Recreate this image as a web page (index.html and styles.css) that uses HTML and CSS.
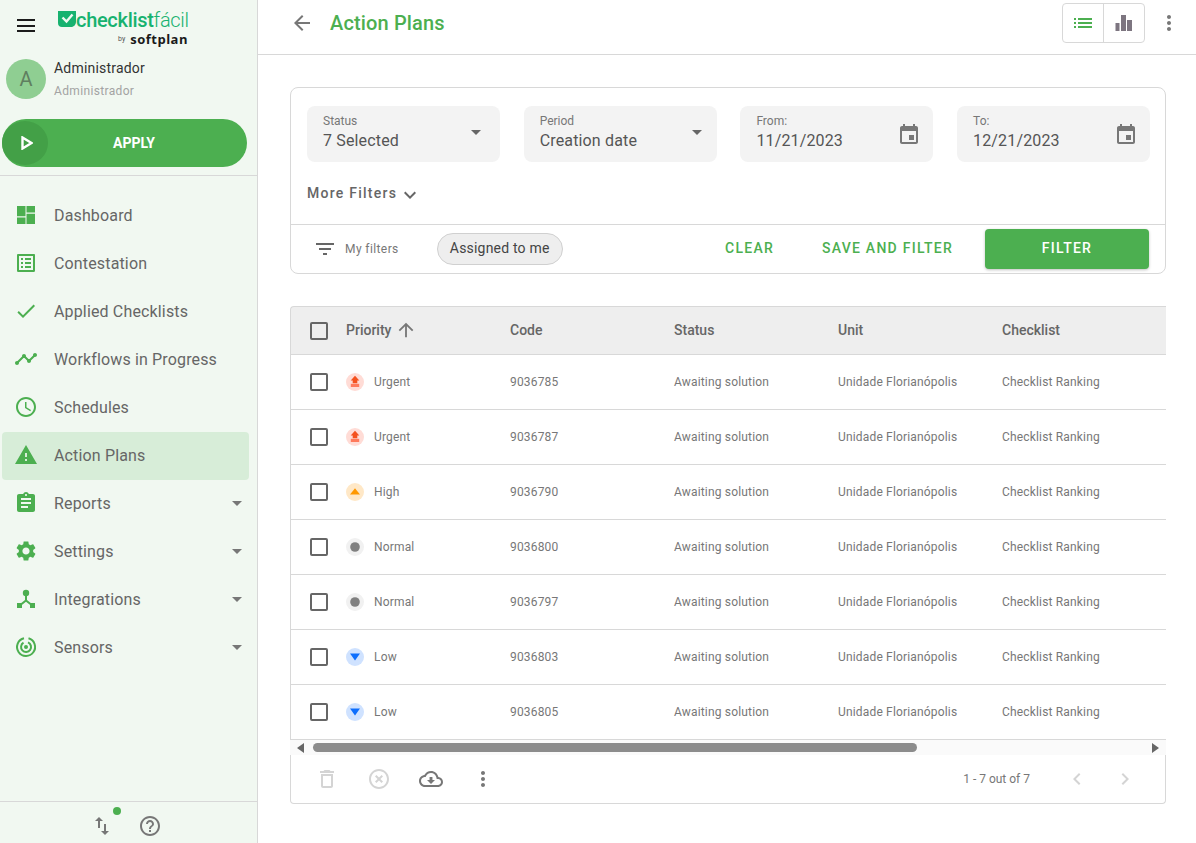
FILE: index.html
```html
<!DOCTYPE html>
<html lang="en">
<head>
<meta charset="utf-8">
<title>Action Plans</title>
<link rel="stylesheet" href="styles.css">
</head>
<body>
<svg class="sprite" width="0" height="0" aria-hidden="true">
  <symbol id="i-dashboard" viewBox="3 3 18 18"><path d="M3 13.300h8.500V3H3zm0 7.700h8.500v-6.600H3zm9.500 0H21V10.700h-8.500zm0-18v6.600H21V3z"/></symbol>
  <symbol id="i-list-alt" viewBox="3 3 18 18"><path d="M19 5v14H5V5h14m1.100-2H3.900c-.5 0-.9.4-.9.9v16.200c0 .4.4.9.9.9h16.200c.4 0 .9-.5.9-.9V3.900c0-.5-.5-.9-.9-.9zM11 7h6v2h-6V7zm0 4h6v2h-6v-2zm0 4h6v2h-6zM7 7h2v2H7zm0 4h2v2H7zm0 4h2v2H7z"/></symbol>
  <symbol id="i-check" viewBox="0 0 24 24"><path d="M9 16.170L4.830 12l-1.420 1.410L9 19 21 7l-1.410-1.410z"/></symbol>
  <symbol id="i-timeline" viewBox="0 0 24 24"><path d="M23 8c0 1.100-.9 2-2 2-.18 0-.35-.02-.51-.07l-3.560 3.550c.05.16.07.34.07.52 0 1.100-.9 2-2 2s-2-.9-2-2c0-.18.02-.36.07-.52l-2.550-2.550c-.16.05-.34.07-.52.07s-.36-.02-.52-.07l-4.550 4.560c.05.16.07.33.07.51 0 1.100-.9 2-2 2s-2-.9-2-2 .9-2 2-2c.18 0 .35.02.51.07l4.560-4.550C8.020 9.360 8 9.180 8 9c0-1.100.9-2 2-2s2 .9 2 2c0 .18-.02.36-.07.52l2.550 2.550c.16-.05.34-.07.52-.07s.36.02.52.07l3.550-3.560C19.020 8.350 19 8.180 19 8c0-1.100.9-2 2-2s2 .9 2 2z"/></symbol>
  <symbol id="i-schedule" viewBox="0 0 24 24"><path d="M11.990 2C6.470 2 2 6.480 2 12s4.470 10 9.990 10C17.520 22 22 17.520 22 12S17.520 2 11.990 2zM12 20c-4.420 0-8-3.580-8-8s3.580-8 8-8 8 3.580 8 8-3.580 8-8 8zm.5-13H11v6l5.250 3.150.75-1.230-4.500-2.670z"/></symbol>
  <symbol id="i-warning" viewBox="0 0 24 24"><path d="M1 21h22L12 2 1 21zm12-3h-2v-2h2v2zm0-4h-2v-4h2v4z"/></symbol>
  <symbol id="i-assignment" viewBox="0 0 24 24"><path d="M19 3h-4.180C14.400 1.840 13.300 1 12 1c-1.300 0-2.400.84-2.820 2H5c-1.100 0-2 .9-2 2v14c0 1.100.9 2 2 2h14c1.100 0 2-.9 2-2V5c0-1.100-.9-2-2-2zm-7 0c.55 0 1 .45 1 1s-.45 1-1 1-1-.45-1-1 .45-1 1-1zm2 14H7v-2h7v2zm3-4H7v-2h10v2zm0-4H7V7h10v2z"/></symbol>
  <symbol id="i-settings" viewBox="0 0 24 24"><path d="M19.140 12.940c.04-.3.06-.61.06-.94 0-.32-.02-.64-.07-.94l2.030-1.580c.18-.14.23-.41.12-.61l-1.920-3.320c-.12-.22-.37-.29-.59-.22l-2.390.96c-.5-.38-1.030-.7-1.620-.94l-.36-2.540c-.04-.24-.24-.41-.48-.41h-3.840c-.24 0-.43.17-.47.41l-.36 2.540c-.59.24-1.130.57-1.620.94l-2.390-.96c-.22-.08-.47 0-.59.22L2.740 8.870c-.12.21-.08.47.12.61l2.030 1.580c-.05.3-.09.63-.09.94s.02.64.07.94l-2.030 1.580c-.18.14-.23.41-.12.61l1.920 3.320c.12.22.37.29.59.22l2.390-.96c.5.38 1.030.7 1.620.94l.36 2.540c.05.24.24.41.48.41h3.840c.24 0 .44-.17.47-.41l.36-2.540c.59-.24 1.130-.56 1.620-.94l2.390.96c.22.08.47 0 .59-.22l1.920-3.320c.12-.22.07-.47-.12-.61l-2.010-1.580zM12 15.600c-1.980 0-3.600-1.620-3.600-3.600s1.620-3.600 3.600-3.600 3.600 1.620 3.600 3.600-1.620 3.600-3.600 3.600z"/></symbol>
  <symbol id="i-integrations" viewBox="0 0 24 24"><circle cx="12" cy="6" r="3.200"/><path d="M11 8h2v5l5 4-1.200 1.600L12 14.800l-4.800 3.800L6 17l5-4z"/><path d="M3 16h5v5H3zM16 16h5v5h-5z"/></symbol>
  <symbol id="i-sensors" viewBox="0 0 24 24"><path d="M14.500 3.300A9 9 0 1 1 10 3.200M14 7.400A5 5 0 1 1 9.500 7.700" fill="none" stroke="currentColor" stroke-width="2"/><circle cx="12" cy="12" r="2"/></symbol>
  <symbol id="i-drop" viewBox="0 0 24 24"><path d="M7 10l5 5 5-5z"/></symbol>
  <symbol id="i-swap" viewBox="0 0 24 24"><path d="M16 17.010V10h-2v7.010h-3L15 21l4-3.990h-3zM9 3L5 6.990h3V14h2V6.990h3L9 3z"/></symbol>
  <symbol id="i-help" viewBox="0 0 24 24"><path d="M11 18h2v-2h-2v2zm1-16C6.480 2 2 6.480 2 12s4.480 10 10 10 10-4.480 10-10S17.520 2 12 2zm0 18c-4.410 0-8-3.590-8-8s3.590-8 8-8 8 3.590 8 8-3.590 8-8 8zm0-14c-2.210 0-4 1.790-4 4h2c0-1.100.9-2 2-2s2 .9 2 2c0 2-3 1.750-3 5h2c0-2.250 3-2.500 3-5 0-2.210-1.790-4-4-4z"/></symbol>
  <symbol id="i-event" viewBox="0 0 24 24"><path d="M17 12h-5v5h5v-5zM16 1v2H8V1H6v2H5c-1.110 0-1.990.9-1.990 2L3 19c0 1.100.89 2 2 2h14c1.100 0 2-.9 2-2V5c0-1.100-.9-2-2-2h-1V1h-2zm3 18H5V8h14v11z"/></symbol>
  <symbol id="i-back" viewBox="0 0 24 24"><path d="M20 11H7.830l5.590-5.590L12 4l-8 8 8 8 1.410-1.410L7.830 13H20v-2z"/></symbol>
  <symbol id="i-list" viewBox="0 0 24 24"><path d="M3 13h2v-2H3v2zm0 4h2v-2H3v2zm0-8h2V7H3v2zm4 4h14v-2H7v2zm0 4h14v-2H7v2zM7 7v2h14V7H7z"/></symbol>
  <symbol id="i-bars" viewBox="0 0 18 18"><path d="M.5 9h4v8h-4zM6 1h5v16H6zM12 6h5v11h-5z"/></symbol>
  <symbol id="i-more" viewBox="0 0 24 24"><path d="M12 8c1.100 0 2-.9 2-2s-.9-2-2-2-2 .9-2 2 .9 2 2 2zm0 2c-1.100 0-2 .9-2 2s.9 2 2 2 2-.9 2-2-.9-2-2-2zm0 6c-1.100 0-2 .9-2 2s.9 2 2 2 2-.9 2-2-.9-2-2-2z"/></symbol>
  <symbol id="i-expand" viewBox="0 0 24 24"><path d="M16.590 8.590L12 13.170 7.410 8.590 6 10l6 6 6-6z"/></symbol>
  <symbol id="i-filter" viewBox="0 0 24 24"><path d="M10 18h4v-2h-4v2zM3 6v2h18V6H3zm3 7h12v-2H6v2z"/></symbol>
  <symbol id="i-up" viewBox="0 0 24 24"><path d="M4 12l1.410 1.410L11 7.830V20h2V7.830l5.580 5.590L20 12l-8-8-8 8z"/></symbol>
  <symbol id="i-delete" viewBox="0 0 24 24"><path d="M6 19c0 1.100.9 2 2 2h8c1.100 0 2-.9 2-2V7H6v12zM8 9h8v10H8V9zm7.500-5l-1-1h-5l-1 1H5v2h14V4z"/></symbol>
  <symbol id="i-off" viewBox="0 0 24 24"><path d="M14.590 8L12 10.590 9.410 8 8 9.410 10.590 12 8 14.590 9.410 16 12 13.410 14.590 16 16 14.590 13.410 12 16 9.410 14.590 8zM12 2C6.470 2 2 6.470 2 12s4.470 10 10 10 10-4.470 10-10S17.530 2 12 2zm0 18c-4.410 0-8-3.590-8-8s3.590-8 8-8 8 3.590 8 8-3.590 8-8 8z"/></symbol>
  <symbol id="i-cloud" viewBox="0 0 24 24"><path d="M19.350 10.040C18.670 6.590 15.640 4 12 4 9.110 4 6.600 5.640 5.350 8.040 2.340 8.360 0 10.910 0 14c0 3.310 2.690 6 6 6h13c2.760 0 5-2.240 5-5 0-2.640-2.050-4.780-4.650-4.960zM19 18H6c-2.210 0-4-1.790-4-4 0-2.050 1.530-3.760 3.560-3.970l1.070-.11.5-.95C8.080 7.140 9.940 6 12 6c2.620 0 4.880 1.860 5.390 4.430l.3 1.500 1.530.11c1.560.1 2.780 1.410 2.780 2.960 0 1.650-1.350 3-3 3zm-5.550-8h-2.900v3H8l4 4 4-4h-2.550z"/></symbol>
  <symbol id="i-left" viewBox="0 0 24 24"><path d="M15.410 7.410L14 6l-6 6 6 6 1.410-1.410L10.830 12z"/></symbol>
  <symbol id="i-right" viewBox="0 0 24 24"><path d="M10 6L8.590 7.410 13.170 12l-4.580 4.580L10 18l6-6z"/></symbol>
  <symbol id="p-urgent" viewBox="0 0 18 18"><path d="M9 2.800l4.300 4.700h-2v2.700H6.700V7.500h-2z" fill="#f4511e"/><path d="M4.800 10.800h8.400V14H4.800z" fill="#ff7a5c"/></symbol>
  <symbol id="p-high" viewBox="0 0 18 18"><path d="M9 5.300l5 6.200H4z" fill="#ff9800"/></symbol>
  <symbol id="p-normal" viewBox="0 0 18 18"><circle cx="9" cy="9" r="4.800" fill="#808080"/></symbol>
  <symbol id="p-low" viewBox="0 0 18 18"><path d="M4 5.500h10l-5 7z" fill="#0d6efd"/></symbol>
</svg>

<div class="app">
  <aside class="sidebar">
    <div class="brand-row">
      <button class="burger" aria-label="Menu"><span></span><span></span><span></span></button>
      <div class="logo">
        <div class="logo-main">
          <svg class="logo-mark" viewBox="0 0 18 16"><path d="M0 0h18v10.500c0 3-2 5.500-5 5.500H4c-2.500 0-4-1.500-4-4z" fill="#17b26f"/><path d="M4.500 6.500l4 4 6-7" fill="none" stroke="#f1f8f1" stroke-width="2.400"/></svg>
          <span class="logo-bold">checklist</span><span class="logo-light">fácil</span>
        </div>
        <div class="logo-sub"><span class="logo-by">by</span><span class="logo-soft">softplan</span></div>
      </div>
    </div>
    <div class="user">
      <div class="avatar">A</div>
      <div class="user-text">
        <div class="user-name">Administrador</div>
        <div class="user-role">Administrador</div>
      </div>
    </div>
    <button class="apply">
      <span class="apply-circle"><svg class="apply-play" viewBox="0 0 12 14"><path d="M1.500 1.500v11l9-5.500z" fill="none" stroke="#fff" stroke-width="2.400"/></svg></span>
      <span class="apply-label">APPLY</span>
    </button>
    <nav class="nav">
      <a class="nav-item"><span class="nav-icon"><svg class="ic18"><use href="#i-dashboard"/></svg></span><span class="nav-label">Dashboard</span></a>
      <a class="nav-item"><span class="nav-icon"><svg class="ic18"><use href="#i-list-alt"/></svg></span><span class="nav-label">Contestation</span></a>
      <a class="nav-item"><span class="nav-icon"><svg class="ic24"><use href="#i-check"/></svg></span><span class="nav-label">Applied Checklists</span></a>
      <a class="nav-item"><span class="nav-icon"><svg class="ic24"><use href="#i-timeline"/></svg></span><span class="nav-label">Workflows in Progress</span></a>
      <a class="nav-item"><span class="nav-icon"><svg class="ic24"><use href="#i-schedule"/></svg></span><span class="nav-label">Schedules</span></a>
      <a class="nav-item active"><span class="nav-icon"><svg class="ic24"><use href="#i-warning"/></svg></span><span class="nav-label">Action Plans</span></a>
      <a class="nav-item"><span class="nav-icon"><svg class="ic24"><use href="#i-assignment"/></svg></span><span class="nav-label">Reports</span><svg class="nav-drop"><use href="#i-drop"/></svg></a>
      <a class="nav-item"><span class="nav-icon"><svg class="ic24"><use href="#i-settings"/></svg></span><span class="nav-label">Settings</span><svg class="nav-drop"><use href="#i-drop"/></svg></a>
      <a class="nav-item"><span class="nav-icon"><svg class="ic24"><use href="#i-integrations"/></svg></span><span class="nav-label">Integrations</span><svg class="nav-drop"><use href="#i-drop"/></svg></a>
      <a class="nav-item"><span class="nav-icon"><svg class="ic24"><use href="#i-sensors"/></svg></span><span class="nav-label">Sensors</span><svg class="nav-drop"><use href="#i-drop"/></svg></a>
    </nav>
    <div class="side-foot">
      <span class="swap-wrap"><svg class="foot-swap"><use href="#i-swap"/></svg><span class="status-dot"></span></span>
      <svg class="foot-help"><use href="#i-help"/></svg>
    </div>
  </aside>

  <main class="main">
    <header class="topbar">
      <svg class="back"><use href="#i-back"/></svg>
      <h1 class="title">Action Plans</h1>
      <div class="toggle">
        <span class="toggle-btn"><svg class="toggle-list"><use href="#i-list"/></svg></span>
        <span class="toggle-btn"><svg class="toggle-bars"><use href="#i-bars"/></svg></span>
      </div>
      <svg class="top-more"><use href="#i-more"/></svg>
    </header>

    <div class="content">
      <section class="filters">
        <div class="filter-fields">
          <div class="field"><div class="field-text"><span class="field-label">Status</span><span class="field-value">7 Selected</span></div><svg class="field-drop status-drop"><use href="#i-drop"/></svg></div>
          <div class="field"><div class="field-text"><span class="field-label">Period</span><span class="field-value">Creation date</span></div><svg class="field-drop"><use href="#i-drop"/></svg></div>
          <div class="field"><div class="field-text"><span class="field-label">From:</span><span class="field-value">11/21/2023</span></div><svg class="field-cal"><use href="#i-event"/></svg></div>
          <div class="field"><div class="field-text"><span class="field-label">To:</span><span class="field-value">12/21/2023</span></div><svg class="field-cal"><use href="#i-event"/></svg></div>
        </div>
        <div class="more-filters"><span>More Filters</span><svg class="more-ic"><use href="#i-expand"/></svg></div>
        <div class="filter-actions">
          <svg class="filter-ic"><use href="#i-filter"/></svg>
          <span class="my-filters">My filters</span>
          <span class="chip">Assigned to me</span>
          <span class="spacer"></span>
          <button class="text-btn clear">CLEAR</button>
          <button class="text-btn save">SAVE AND FILTER</button>
          <button class="filter-btn">FILTER</button>
        </div>
      </section>

      <section class="grid">
        <div class="row head">
          <span class="cell-check"><span class="checkbox"></span></span>
          <span class="cell prio">Priority<svg class="sort"><use href="#i-up"/></svg></span>
          <span class="cell">Code</span><span class="cell">Status</span><span class="cell">Unit</span><span class="cell">Checklist</span>
        </div>
        <div class="row">
          <span class="cell-check"><span class="checkbox"></span></span>
          <span class="cell prio"><span class="badge b-urgent"><svg><use href="#p-urgent"/></svg></span>Urgent</span>
          <span class="cell">9036785</span><span class="cell">Awaiting solution</span><span class="cell">Unidade Florianópolis</span><span class="cell">Checklist Ranking</span>
        </div>
        <div class="row">
          <span class="cell-check"><span class="checkbox"></span></span>
          <span class="cell prio"><span class="badge b-urgent"><svg><use href="#p-urgent"/></svg></span>Urgent</span>
          <span class="cell">9036787</span><span class="cell">Awaiting solution</span><span class="cell">Unidade Florianópolis</span><span class="cell">Checklist Ranking</span>
        </div>
        <div class="row">
          <span class="cell-check"><span class="checkbox"></span></span>
          <span class="cell prio"><span class="badge b-high"><svg><use href="#p-high"/></svg></span>High</span>
          <span class="cell">9036790</span><span class="cell">Awaiting solution</span><span class="cell">Unidade Florianópolis</span><span class="cell">Checklist Ranking</span>
        </div>
        <div class="row">
          <span class="cell-check"><span class="checkbox"></span></span>
          <span class="cell prio"><span class="badge b-normal"><svg><use href="#p-normal"/></svg></span>Normal</span>
          <span class="cell">9036800</span><span class="cell">Awaiting solution</span><span class="cell">Unidade Florianópolis</span><span class="cell">Checklist Ranking</span>
        </div>
        <div class="row">
          <span class="cell-check"><span class="checkbox"></span></span>
          <span class="cell prio"><span class="badge b-normal"><svg><use href="#p-normal"/></svg></span>Normal</span>
          <span class="cell">9036797</span><span class="cell">Awaiting solution</span><span class="cell">Unidade Florianópolis</span><span class="cell">Checklist Ranking</span>
        </div>
        <div class="row">
          <span class="cell-check"><span class="checkbox"></span></span>
          <span class="cell prio"><span class="badge b-low"><svg><use href="#p-low"/></svg></span>Low</span>
          <span class="cell">9036803</span><span class="cell">Awaiting solution</span><span class="cell">Unidade Florianópolis</span><span class="cell">Checklist Ranking</span>
        </div>
        <div class="row">
          <span class="cell-check"><span class="checkbox"></span></span>
          <span class="cell prio"><span class="badge b-low"><svg><use href="#p-low"/></svg></span>Low</span>
          <span class="cell">9036805</span><span class="cell">Awaiting solution</span><span class="cell">Unidade Florianópolis</span><span class="cell">Checklist Ranking</span>
        </div>
        <div class="hscroll">
          <span class="arrow-left"></span>
          <span class="thumb"></span>
          <span class="arrow-right"></span>
        </div>
        <div class="grid-foot">
          <svg class="foot-ic muted ic-delete"><use href="#i-delete"/></svg>
          <svg class="foot-ic muted ic-off"><use href="#i-off"/></svg>
          <svg class="foot-ic ic-cloud"><use href="#i-cloud"/></svg>
          <svg class="foot-ic ic-more"><use href="#i-more"/></svg>
          <span class="spacer"></span>
          <span class="pager-text">1 - 7 out of 7</span>
          <svg class="pager-ic pager-prev"><use href="#i-left"/></svg>
          <svg class="pager-ic pager-next"><use href="#i-right"/></svg>
        </div>
      </section>
    </div>
  </main>
</div>
</body>
</html>
```

FILE: styles.css
```css
* { box-sizing: border-box; }
html, body { margin: 0; height: 100%; }
body {
  font-family: Roboto, "Liberation Sans", sans-serif;
  color: #666;
  background: #fff;
  overflow: hidden;
}
button { font-family: inherit; border: 0; background: none; padding: 0; cursor: pointer; }
svg { display: block; fill: currentColor; }
.sprite { position: absolute; }
.app { display: flex; height: 843px; }

/* Sidebar */
.sidebar {
  width: 258px;
  flex: none;
  display: flex;
  flex-direction: column;
  background: #f1f8f1;
  border-right: 1px solid #d8d8d8;
}
.brand-row { height: 57px; display: flex; padding: 10px 0 0 17px; }
.burger { width: 18px; height: 13px; margin-top: 9px; display: flex; flex-direction: column; justify-content: space-between; }
.burger span { display: block; height: 2px; background: #1c1c1c; }
.logo { margin-left: 23px; width: 130px; }
.logo-main { display: flex; align-items: center; height: 20px; color: #17b26f; font-size: 20px; line-height: 20px; letter-spacing: -0.3px; }
.logo-mark { width: 18px; height: 16px; flex: none; margin-top: -2px; }
.logo-bold { font-weight: 500; }
.logo-light { font-weight: 300; }
.logo-sub { display: flex; justify-content: flex-end; align-items: center; height: 14px; margin-top: 2px; color: #1a1a1a; }
.logo-by { font-size: 7px; margin-right: 5px; color: #555; }
.logo-soft { font-family: "Open Sans", sans-serif; font-size: 13px; font-weight: 700; line-height: 14px; letter-spacing: 0.5px; }

.user { height: 62px; display: flex; padding: 2px 0 0 6px; }
.avatar { width: 40px; height: 40px; border-radius: 50%; background: #8fce92; color: #5f7f60; font-size: 20px; display: flex; align-items: center; justify-content: center; }
.user-text { margin-left: 8px; }
.user-name { font-size: 14px; line-height: 16px; color: #333; margin-top: 1px; letter-spacing: 0.2px; }
.user-role { font-size: 12px; line-height: 14px; color: #a3a3a3; margin-top: 8px; letter-spacing: 0.35px; }

.apply { margin-left: 2px; width: 245px; height: 48px; border-radius: 24px; background: #4caf50; display: flex; align-items: center; flex: none; }
.apply-circle { width: 46px; height: 44px; border-radius: 50%; background: #43a047; display: flex; align-items: center; justify-content: center; flex: none; }
.apply-play { width: 12px; height: 14px; margin-left: 3px; }
.apply-label { flex: 1; padding-right: 27px; text-align: center; color: #fff; font-size: 14px; font-weight: 700; }

.nav { margin-top: 8px; padding-top: 15px; border-top: 1px solid #d8d8d8; flex: 1; }
.nav-item { display: flex; align-items: center; height: 48px; margin: 0 8px 0 2px; border-radius: 4px; color: #666; font-size: 16px; letter-spacing: 0.15px; }
.nav-item.active { background: #d7edd8; margin-top: 1px; margin-bottom: -1px; padding-bottom: 2px; }
.nav-icon { width: 52px; padding-left: 12px; flex: none; display: flex; align-items: center; color: #4caf50; }
.ic18 { width: 18px; height: 18px; margin-left: 3px; }
.ic24 { width: 24px; height: 24px; }
.nav-label { flex: 1; }
.nav-drop { width: 24px; height: 24px; color: #777; }

.side-foot { height: 42px; flex: none; border-top: 1px solid #d8d8d8; display: flex; justify-content: flex-start; padding: 12px 0 0 90px; color: #777; }
.swap-wrap { position: relative; width: 24px; height: 24px; display: block; }
.foot-swap { width: 24px; height: 24px; }
.status-dot { position: absolute; left: 23px; top: -7px; width: 8px; height: 8px; border-radius: 50%; background: #4caf50; }
.foot-help { width: 24px; height: 24px; margin-left: 24px; }

/* Main */
.main { flex: 1; display: flex; flex-direction: column; min-width: 0; }
.topbar { height: 55px; flex: none; border-bottom: 1px solid #d8d8d8; display: flex; align-items: center; padding: 0 15px 8px 32px; }
.back { width: 24px; height: 24px; color: #777; }
.title { margin: 0 0 0 16px; font-size: 20px; font-weight: 500; color: #4caf50; flex: 1; letter-spacing: 0.15px; }
.toggle { display: flex; height: 40px; border: 1px solid #d8d8d8; border-radius: 4px; }
.toggle-btn { width: 40px; display: flex; align-items: center; justify-content: center; }
.toggle-btn + .toggle-btn { width: 41px; border-left: 1px solid #d8d8d8; }
.toggle-list { width: 24px; height: 24px; color: #4caf50; }
.toggle-bars { width: 18px; height: 18px; color: #7d7580; }
.top-more { width: 24px; height: 24px; margin-left: 12px; color: #777; }

.content { padding: 32px 30px 0 32px; }
.filters { height: 187px; border: 1px solid #d8d8d8; border-radius: 8px; }
.filter-fields { display: grid; grid-template-columns: repeat(4, 193px); column-gap: 23.7px; padding: 18px 15px 0 16px; }
.field { height: 56px; background: #f3f3f3; border-radius: 8px; padding: 8px 15px 0 16px; display: flex; align-items: flex-start; justify-content: space-between; }
.field-text { display: flex; flex-direction: column; }
.field-label { font-size: 12px; line-height: 14px; color: #777; }
.field-value { font-size: 16px; line-height: 19px; margin-top: 3px; color: #555; letter-spacing: 0.15px; }
.field-drop { width: 24px; height: 24px; margin: 6px -7px 0 0; color: #666; }
.status-drop { margin-right: -3px; }
.field-cal { width: 24px; height: 24px; margin: 9px -3px 0 0; color: #777; }
.more-filters { height: 62px; padding: 22px 0 0 16px; display: flex; align-items: flex-start; font-size: 14px; line-height: 19px; font-weight: 500; letter-spacing: 1.25px; color: #666; }
.more-ic { width: 24px; height: 24px; margin: -1px 0 0 1px; }
.filter-actions { height: 49px; border-top: 1px solid #d8d8d8; display: flex; align-items: center; padding: 0 16px 0 22px; }
.filter-ic { width: 24px; height: 24px; color: #666; }
.my-filters { margin-left: 8px; font-size: 12px; color: #777; letter-spacing: 0.4px; }
.chip { margin-left: 38px; height: 32px; width: 126px; padding-bottom: 2px; display: flex; align-items: center; justify-content: center; background: #eee; border: 1px solid #d0d0d0; border-radius: 16px; font-size: 14px; color: #444; letter-spacing: 0.2px; }
.spacer { flex: 1; }
.text-btn { font-size: 14px; font-weight: 500; letter-spacing: 1.25px; color: #4caf50; padding-bottom: 2px; }
.save { margin-left: 48px; }
.filter-btn { margin-left: 32px; width: 164px; height: 40px; padding-bottom: 2px; border-radius: 4px; background: #4caf50; color: #fff; font-size: 14px; font-weight: 500; letter-spacing: 1.25px; box-shadow: 0 1px 3px rgba(0,0,0,.25); }

/* Grid */
.grid { margin-top: 32px; }
.row { display: flex; align-items: center; height: 55px; border-bottom: 1px solid #d8d8d8; border-left: 1px solid #d8d8d8; font-size: 12px; color: #777; letter-spacing: 0.17px; }
.row.head { height: 49px; background: #eee; border-top: 1px solid #d8d8d8; border-top-left-radius: 4px; font-size: 14px; font-weight: 500; color: #666; letter-spacing: 0; }
.head .cell { padding-bottom: 2px; }
.cell-check { width: 55px; padding-left: 19px; flex: none; }
.checkbox { display: block; width: 18px; height: 18px; border: 2px solid #666; border-radius: 2px; }
.cell { width: 164px; flex: none; display: flex; align-items: center; }
.prio { gap: 10px; }
.head .prio { gap: 4px; }
.sort { width: 22px; height: 22px; margin-top: 1px; color: #777; }
.badge { width: 18px; height: 18px; border-radius: 50%; display: block; }
.badge svg { width: 18px; height: 18px; }
.b-urgent { background: #ffdcd6; }
.b-high { background: #ffe8c7; }
.b-normal { background: #f1f1f1; }
.b-low { background: #cfe2ff; }

.hscroll { height: 15px; background: #fafafa; display: flex; align-items: center; padding: 0 7px; }
.arrow-left { width: 0; height: 0; border: 5px solid transparent; border-left: 0; border-right: 7px solid #666; }
.thumb { margin-left: 9px; width: 604px; height: 9px; border-radius: 5px; background: #8c8c8c; }
.arrow-right { margin-left: auto; width: 0; height: 0; border: 5px solid transparent; border-right: 0; border-left: 7px solid #666; }
.grid-foot { height: 49px; display: flex; align-items: center; border: 1px solid #d8d8d8; border-top: 0; border-radius: 0 0 4px 4px; padding: 0 28px 0 24px; color: #777; }
.foot-ic { width: 24px; height: 24px; }
.muted { color: #d4d4d4; }
.ic-off { margin-left: 28px; }
.ic-cloud { margin-left: 28px; }
.ic-more { margin-left: 28px; }
.pager-text { font-size: 12px; color: #777; }
.pager-ic { width: 24px; height: 24px; color: #d4d4d4; }
.pager-prev { margin-left: 35px; }
.pager-next { margin-left: 24px; }
```
